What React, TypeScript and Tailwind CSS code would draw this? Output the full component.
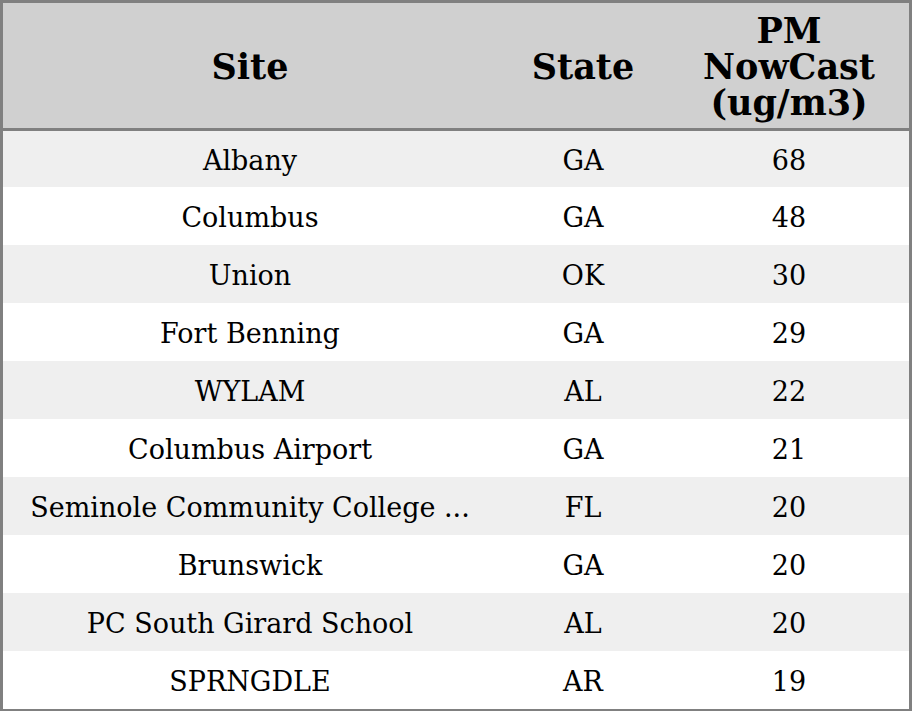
const ROWS: [string, string, number][] = [
  ["Albany", "GA", 68],
  ["Columbus", "GA", 48],
  ["Union", "OK", 30],
  ["Fort Benning", "GA", 29],
  ["WYLAM", "AL", 22],
  ["Columbus Airport", "GA", 21],
  ["Seminole Community College ...", "FL", 20],
  ["Brunswick", "GA", 20],
  ["PC South Girard School", "AL", 20],
  ["SPRNGDLE", "AR", 19],
];

export default function App() {
  return (
    <div className="h-[711px] w-[912px] border-[3px] border-[#808080] bg-white font-['DejaVu_Serif',serif] text-black">
      <table className="w-full table-fixed border-collapse">
        <colgroup>
          <col className="w-[494px]" />
          <col className="w-[172px]" />
          <col className="w-[240px]" />
        </colgroup>
        <thead>
          <tr className="h-[126px] border-b-[3px] border-[#808080] bg-[#d0d0d0] text-[35px] font-bold leading-[36px]">
            <th className="px-2 pt-[3px]">Site</th>
            <th className="px-2 pt-[3px]">State</th>
            <th className="px-2 pt-[3px]">
              PM
              <br />
              NowCast
              <br />
              (ug/m3)
            </th>
          </tr>
        </thead>
        <tbody className="text-[27px]">
          {ROWS.map(([site, state, value], i) => (
            <tr
              key={site}
              className={`h-[58px] ${i % 2 === 0 ? "bg-[#efefef]" : "bg-white"}`}
            >
              <td className="whitespace-nowrap px-2 pt-[5px] text-center">{site}</td>
              <td className="pt-[5px] text-center">{state}</td>
              <td className="pt-[5px] text-center">{value}</td>
            </tr>
          ))}
        </tbody>
      </table>
    </div>
  );
}
